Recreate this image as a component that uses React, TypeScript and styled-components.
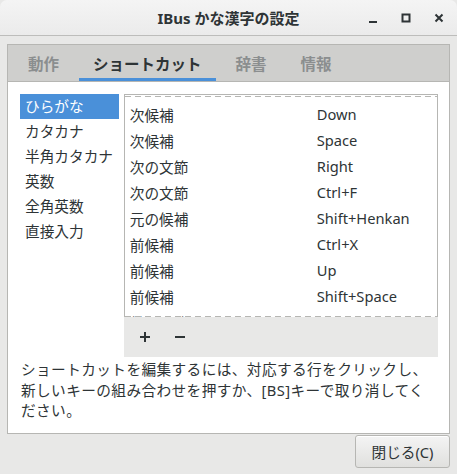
import { createGlobalStyle } from 'styled-components';
import styled from 'styled-components';

const GlobalStyle = createGlobalStyle`
	html, body {
		margin: 0;
		padding: 0;
		background: #e8e8e7;
	}
	body {
		font-family: 'Noto Sans', 'Noto Sans CJK JP', sans-serif;
		font-size: 14.67px;
		color: #2e3436;
	}
`;

const TABS = ['動作', 'ショートカット', '辞書', '情報'];
const MODES = ['ひらがな', 'カタカナ', '半角カタカナ', '英数', '全角英数', '直接入力'];
const SHORTCUTS: [string, string][] = [
	['次候補', 'Down'],
	['次候補', 'Space'],
	['次の文節', 'Right'],
	['次の文節', 'Ctrl+F'],
	['元の候補', 'Shift+Henkan'],
	['前候補', 'Ctrl+X'],
	['前候補', 'Up'],
	['前候補', 'Shift+Space'],
	['前の文節', 'Left'],
];

const App = () => {
	return (
		<>
			<GlobalStyle />
			<Window>
				<TitleBar>
					<Title>IBus かな漢字の設定</Title>
					<Controls>
						<ControlButton>
							<svg width="10" height="10" viewBox="0 0 10 10">
								<rect x="1" y="8" width="8" height="2" fill="#2e3436" />
							</svg>
						</ControlButton>
						<ControlButton>
							<svg width="10" height="10" viewBox="0 0 10 10">
								<rect x="1.5" y="1.5" width="7" height="7" fill="none" stroke="#2e3436" strokeWidth="2" />
							</svg>
						</ControlButton>
						<ControlButton>
							<svg width="10" height="10" viewBox="0 0 10 10">
								<path d="M1.5 1.5 L8.5 8.5 M8.5 1.5 L1.5 8.5" stroke="#2e3436" strokeWidth="2" />
							</svg>
						</ControlButton>
					</Controls>
				</TitleBar>
				<Body>
					<Notebook>
						<TabBar>
							{TABS.map((tab, i) => (
								<Tab key={tab} $active={i === 1}>
									{tab}
								</Tab>
							))}
						</TabBar>
						<Page>
							<Columns>
								<ModeList>
									{MODES.map((mode, i) => (
										<ModeRow key={mode} $selected={i === 0}>
											{mode}
										</ModeRow>
									))}
								</ModeList>
								<ShortcutPane>
									<ShortcutScroll>
										{SHORTCUTS.map(([cmd, key], i) => (
											<ShortcutRow key={i}>
												<CommandCell>{cmd}</CommandCell>
												<KeyCell>{key}</KeyCell>
											</ShortcutRow>
										))}
									</ShortcutScroll>
									<Toolbar>
										<ToolButton>
											<svg width="12" height="12" viewBox="0 0 12 12">
												<path d="M6 1 V11 M1 6 H11" stroke="#2e3436" strokeWidth="2" />
											</svg>
										</ToolButton>
										<ToolButton>
											<svg width="12" height="12" viewBox="0 0 12 12">
												<path d="M1 6 H11" stroke="#2e3436" strokeWidth="2" />
											</svg>
										</ToolButton>
									</Toolbar>
								</ShortcutPane>
							</Columns>
							<HelpText>
								ショートカットを編集するには、対応する行をクリックし、新しいキーの組み合わせを押すか、[BS]キーで取り消してください。
							</HelpText>
						</Page>
					</Notebook>
					<ButtonRow>
						<CloseButton>閉じる(C)</CloseButton>
					</ButtonRow>
				</Body>
			</Window>
		</>
	);
};

export default App;

const Window = styled.div`
	width: 457px;
	height: 474px;
	display: flex;
	flex-direction: column;
	background: #e8e8e7;
	overflow: hidden;
`;

const TitleBar = styled.div`
	position: relative;
	height: 35px;
	flex-shrink: 0;
	display: flex;
	align-items: center;
	justify-content: center;
	background: linear-gradient(to bottom, #f4f4f4, #ebebeb);
	border-bottom: 1px solid #bdbdbb;
	border-radius: 7px 7px 0 0;
`;

const Title = styled.div`
	font-weight: bold;
	font-size: 15px;
	color: #2e3436;
`;

const Controls = styled.div`
	position: absolute;
	right: 8px;
	top: 0;
	height: 35px;
	display: flex;
	align-items: center;
	gap: 13px;
`;

const ControlButton = styled.div`
	width: 20px;
	height: 20px;
	display: flex;
	align-items: center;
	justify-content: center;
`;

const Body = styled.div`
	flex: 1;
	display: flex;
	flex-direction: column;
	padding: 8px 7px 0 7px;
`;

const Notebook = styled.div`
	height: 388px;
	display: flex;
	flex-direction: column;
	border: 1px solid #b6b6b3;
`;

const TabBar = styled.div`
	height: 36px;
	display: flex;
	align-items: stretch;
	padding-left: 6px;
	background: #cfcfcd;
	border-bottom: 1px solid #b6b6b3;
`;

const Tab = styled.div<{ $active?: boolean }>`
	display: flex;
	align-items: center;
	padding: 0 14px;
	font-size: 15.5px;
	font-weight: bold;
	color: ${(p) => (p.$active ? '#2e3436' : '#8b8e8f')};
	box-shadow: ${(p) => (p.$active ? 'inset 0 -3px 0 #4a90d9' : 'none')};
	margin-right: 6px;
`;

const Page = styled.div`
	flex: 1;
	background: #ffffff;
	padding: 12px 11px 0 12px;
	display: flex;
	flex-direction: column;
`;

const Columns = styled.div`
	display: flex;
	gap: 5px;
`;

const ModeList = styled.div`
	width: 99px;
	display: flex;
	flex-direction: column;
`;

const ModeRow = styled.div<{ $selected?: boolean }>`
	height: 25px;
	line-height: 25px;
	padding-left: 5px;
	white-space: nowrap;
	background: ${(p) => (p.$selected ? '#4a90d9' : 'transparent')};
	color: ${(p) => (p.$selected ? '#ffffff' : '#2e3436')};
`;

const ShortcutPane = styled.div`
	width: 315px;
	display: flex;
	flex-direction: column;
`;

const ShortcutScroll = styled.div`
	position: relative;
	height: 223px;
	overflow: hidden;
	border: 1px solid #b6b6b3;
	border-bottom: none;
	padding-top: 6px;
	box-sizing: border-box;

	&::before,
	&::after {
		content: '';
		position: absolute;
		left: 0;
		right: 0;
		height: 1px;
		background: repeating-linear-gradient(to right, #b6b6b3 0 6px, transparent 6px 10px);
	}
	&::before {
		top: 1px;
	}
	&::after {
		bottom: 0;
	}
`;

const ShortcutRow = styled.div`
	height: 26px;
	display: flex;
	align-items: center;
	white-space: nowrap;
`;

const CommandCell = styled.div`
	width: 192px;
	padding-left: 5px;
	box-sizing: border-box;
`;

const KeyCell = styled.div`
	flex: 1;
`;

const Toolbar = styled.div`
	height: 40px;
	display: flex;
	align-items: center;
	gap: 11px;
	padding-left: 9px;
	background: #e8e8e7;
`;

const ToolButton = styled.div`
	width: 24px;
	height: 24px;
	display: flex;
	align-items: center;
	justify-content: center;
`;

const HelpText = styled.div`
	margin-top: 2px;
	line-height: 20.5px;
	padding-left: 1px;
	letter-spacing: 0.4px;
`;

const ButtonRow = styled.div`
	display: flex;
	justify-content: flex-end;
	padding-top: 1px;
`;

const CloseButton = styled.div`
	width: 95px;
	height: 33px;
	box-sizing: border-box;
	display: flex;
	align-items: center;
	justify-content: center;
	border: 1px solid #b6b6b3;
	border-radius: 3px;
	background: linear-gradient(to bottom, #f4f4f4, #e0e0de);
	box-shadow: inset 0 1px #ffffff;
	color: #2e3436;
`;
